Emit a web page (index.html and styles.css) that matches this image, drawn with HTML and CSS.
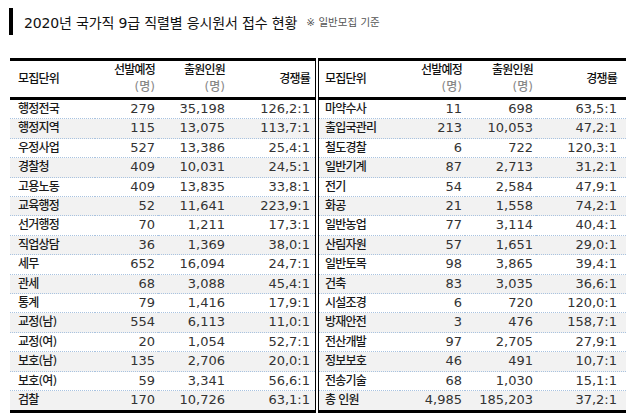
FILE: index.html
```html
<!DOCTYPE html>
<html lang="ko">
<head>
<meta charset="utf-8">
<link rel="stylesheet" href="styles.css">
</head>
<body>
<div class="title"><span class="title-main">2020년 국가직 9급 직렬별 응시원서 접수 현황</span><span class="title-note">※ 일반모집 기준</span></div>
<div class="tables">
<table class="tbl tbl-left">
<colgroup><col class="c1"><col class="c2"><col class="c3"><col class="c4"></colgroup>
<thead><tr><th class="name">모집단위</th><th class="num">선발예정<br><span class="unit">(명)</span></th><th class="num">출원인원<br><span class="unit">(명)</span></th><th class="num">경쟁률</th></tr></thead>
<tbody>
<tr><td class="name">행정전국</td><td class="num">279</td><td class="num">35,198</td><td class="num">126,2:1</td></tr>
<tr><td class="name">행정지역</td><td class="num">115</td><td class="num">13,075</td><td class="num">113,7:1</td></tr>
<tr><td class="name">우정사업</td><td class="num">527</td><td class="num">13,386</td><td class="num">25,4:1</td></tr>
<tr><td class="name">경찰청</td><td class="num">409</td><td class="num">10,031</td><td class="num">24,5:1</td></tr>
<tr><td class="name">고용노동</td><td class="num">409</td><td class="num">13,835</td><td class="num">33,8:1</td></tr>
<tr><td class="name">교육행정</td><td class="num">52</td><td class="num">11,641</td><td class="num">223,9:1</td></tr>
<tr><td class="name">선거행정</td><td class="num">70</td><td class="num">1,211</td><td class="num">17,3:1</td></tr>
<tr><td class="name">직업상담</td><td class="num">36</td><td class="num">1,369</td><td class="num">38,0:1</td></tr>
<tr><td class="name">세무</td><td class="num">652</td><td class="num">16,094</td><td class="num">24,7:1</td></tr>
<tr><td class="name">관세</td><td class="num">68</td><td class="num">3,088</td><td class="num">45,4:1</td></tr>
<tr><td class="name">통계</td><td class="num">79</td><td class="num">1,416</td><td class="num">17,9:1</td></tr>
<tr><td class="name">교정(남)</td><td class="num">554</td><td class="num">6,113</td><td class="num">11,0:1</td></tr>
<tr><td class="name">교정(여)</td><td class="num">20</td><td class="num">1,054</td><td class="num">52,7:1</td></tr>
<tr><td class="name">보호(남)</td><td class="num">135</td><td class="num">2,706</td><td class="num">20,0:1</td></tr>
<tr><td class="name">보호(여)</td><td class="num">59</td><td class="num">3,341</td><td class="num">56,6:1</td></tr>
<tr><td class="name">검찰</td><td class="num">170</td><td class="num">10,726</td><td class="num">63,1:1</td></tr>
</tbody>
</table>
<table class="tbl tbl-right">
<colgroup><col class="c1"><col class="c2"><col class="c3"><col class="c4"></colgroup>
<thead><tr><th class="name">모집단위</th><th class="num">선발예정<br><span class="unit">(명)</span></th><th class="num">출원인원<br><span class="unit">(명)</span></th><th class="num">경쟁률</th></tr></thead>
<tbody>
<tr><td class="name">마약수사</td><td class="num">11</td><td class="num">698</td><td class="num">63,5:1</td></tr>
<tr><td class="name">출입국관리</td><td class="num">213</td><td class="num">10,053</td><td class="num">47,2:1</td></tr>
<tr><td class="name">철도경찰</td><td class="num">6</td><td class="num">722</td><td class="num">120,3:1</td></tr>
<tr><td class="name">일반기계</td><td class="num">87</td><td class="num">2,713</td><td class="num">31,2:1</td></tr>
<tr><td class="name">전기</td><td class="num">54</td><td class="num">2,584</td><td class="num">47,9:1</td></tr>
<tr><td class="name">화공</td><td class="num">21</td><td class="num">1,558</td><td class="num">74,2:1</td></tr>
<tr><td class="name">일반농업</td><td class="num">77</td><td class="num">3,114</td><td class="num">40,4:1</td></tr>
<tr><td class="name">산림자원</td><td class="num">57</td><td class="num">1,651</td><td class="num">29,0:1</td></tr>
<tr><td class="name">일반토목</td><td class="num">98</td><td class="num">3,865</td><td class="num">39,4:1</td></tr>
<tr><td class="name">건축</td><td class="num">83</td><td class="num">3,035</td><td class="num">36,6:1</td></tr>
<tr><td class="name">시설조경</td><td class="num">6</td><td class="num">720</td><td class="num">120,0:1</td></tr>
<tr><td class="name">방재안전</td><td class="num">3</td><td class="num">476</td><td class="num">158,7:1</td></tr>
<tr><td class="name">전산개발</td><td class="num">97</td><td class="num">2,705</td><td class="num">27,9:1</td></tr>
<tr><td class="name">정보보호</td><td class="num">46</td><td class="num">491</td><td class="num">10,7:1</td></tr>
<tr><td class="name">전송기술</td><td class="num">68</td><td class="num">1,030</td><td class="num">15,1:1</td></tr>
<tr><td class="name">총 인원</td><td class="num">4,985</td><td class="num">185,203</td><td class="num">37,2:1</td></tr>
</tbody>
</table>
</div>
</body>
</html>
```
FILE: styles.css
```css
html, body {
  margin: 0;
  padding: 0;
  background: #fff;
}
body {
  font-family: "DejaVu Sans", "Noto Sans CJK KR", sans-serif;
  color: #222;
}
.title {
  display: flex;
  align-items: center;
  height: 27px;
  margin: 8px 0 0 9px;
  border-left: 4px solid #000;
  padding-left: 11px;
}
.title-main {
  font-size: 14px;
  letter-spacing: -0.15px;
  color: #111;
}
.title-note {
  font-size: 10.5px;
  color: #555;
  margin-left: 9px;
}
.tables {
  display: flex;
  margin: 23px 0 0 10px;
}
.tbl {
  border-collapse: separate;
  border-spacing: 0;
  table-layout: fixed;
  border-top: 3px solid #000;
  border-bottom: 3px solid #000;
}
.tbl-left {
  width: 306px;
  border-right: 1px solid #000;
}
.tbl-left .c1 { width: 85px; }
.tbl-left .c2 { width: 63px; }
.tbl-left .c3 { width: 70px; }
.tbl-left .c4 { width: 87px; }
.tbl-right {
  width: 308px;
  margin-left: 2px;
  border-left: 1px solid #000;
}
.tbl-right .c1 { width: 81px; }
.tbl-right .c2 { width: 65px; }
.tbl-right .c3 { width: 71px; }
.tbl-right .c4 { width: 90px; }
.tbl th {
  height: 36px;
  padding: 0 3px 0 0;
  font-size: 12px;
  letter-spacing: -0.8px;
  font-weight: 500;
  line-height: 17px;
  color: #111;
  border-bottom: 3px solid #000;
  vertical-align: middle;
}
.tbl td {
  padding: 0 3px 0 0;
  line-height: 18.4px;
  height: 18.4px;
  font-size: 13px;
  color: #333;
  border-bottom: 1px dotted #a9c3e0;
  white-space: nowrap;
}
.tbl tbody tr:last-child td {
  border-bottom: none;
}
.tbl tbody tr:nth-child(even) td {
  background: #f2f2f2;
}
.tbl td.name {
  font-size: 12px;
  letter-spacing: -0.8px;
  font-weight: 500;
  color: #1a1a1a;
}
.tbl .name {
  text-align: left;
  padding-left: 8px;
}
.tbl-right .name {
  padding-left: 6px;
}
.tbl .num {
  text-align: right;
}
.tbl-left th:last-child, .tbl-left td:last-child {
  padding-right: 5px;
}
.tbl-right th:last-child, .tbl-right td:last-child {
  padding-right: 9px;
}
.unit {
  color: #888;
  letter-spacing: 0;
}
```
